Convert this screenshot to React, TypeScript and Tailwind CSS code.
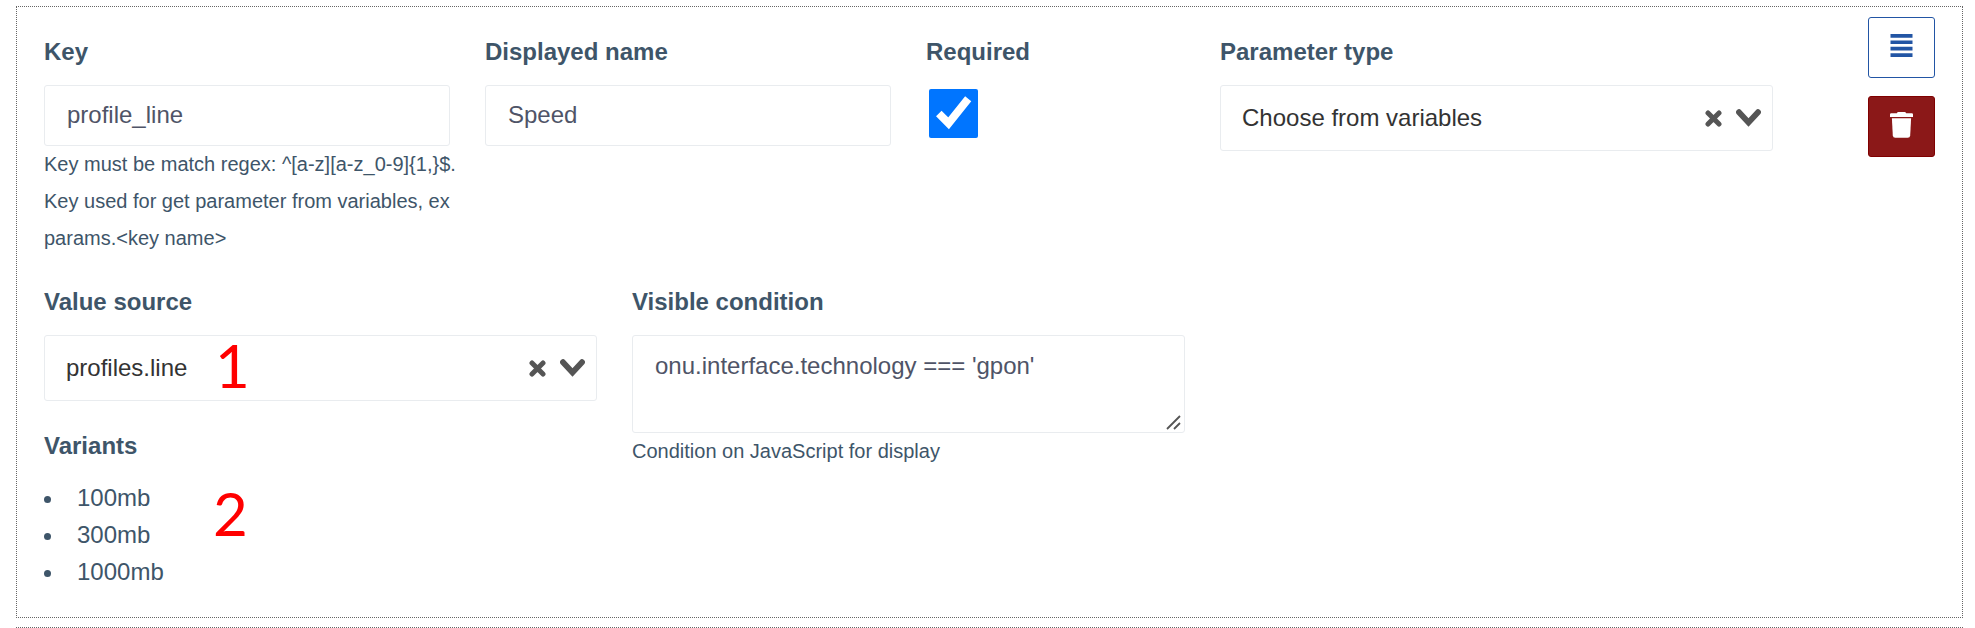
import type { ReactNode } from 'react';

function Label({ htmlFor, children }: { htmlFor: string; children: ReactNode }) {
  return (
    <label htmlFor={htmlFor} className="mb-[15px] block text-2xl leading-[37px] font-bold">
      {children}
    </label>
  );
}

function Help({ children }: { children: ReactNode }) {
  return <p className="text-[20px] leading-[37px] whitespace-nowrap">{children}</p>;
}

function TextInput({ id, value }: { id: string; value: string }) {
  return (
    <input
      id={id}
      type="text"
      defaultValue={value}
      className="block h-[61px] w-full rounded-[3px] border border-[#e9ecef] bg-white px-[22px] pb-[2px] text-2xl text-[#4f5467] outline-none"
    />
  );
}

function SelectBox({ id, value, children }: { id: string; value: string; children?: ReactNode }) {
  return (
    <div className="relative">
      <select
        id={id}
        defaultValue={value}
        className="block h-[66px] w-full appearance-none rounded-[3px] border border-[#e9ecef] bg-white pr-24 pl-[21px] text-2xl text-[#333333] outline-none"
      >
        <option>{value}</option>
      </select>
      <div className="pointer-events-none absolute inset-y-0 right-3 flex items-center gap-[14px] text-[#555555]">
        <button type="button" aria-label="Clear" className="pointer-events-auto">
          <svg width="17" height="17" viewBox="0 0 17 17" className="block">
            <path d="M3 3L14 14M14 3L3 14" stroke="currentColor" strokeWidth="5" strokeLinecap="round" />
          </svg>
        </button>
        <svg width="25" height="18" viewBox="0 0 25 18" aria-hidden="true">
          <path d="M3 3.2L12.5 13.5L22 3.2" fill="none" stroke="currentColor" strokeWidth="5.8" strokeLinecap="round" />
        </svg>
      </div>
      {children}
    </div>
  );
}

function Marker({ children }: { children: ReactNode }) {
  return <span className="block font-['Lato',sans-serif] text-[60px] leading-[60px] text-[#ff0000]">{children}</span>;
}

const variants = ['100mb', '300mb', '1000mb'];

export default function App() {
  return (
    <main className="flex flex-col gap-[9px] bg-white pt-[6px] pr-3 pl-4 font-['Liberation_Sans',Arial,sans-serif] text-[#3e5569]">
      <section className="flex items-start border border-dotted border-[#666666] px-[27px]">
        <div className="mr-[95px] grid flex-1 grid-cols-12 gap-x-[35px] gap-y-[26px] pt-[26px] pb-[27px]">
          <div className="col-span-3 min-w-0">
            <Label htmlFor="key">Key</Label>
            <TextInput id="key" value="profile_line" />
            <Help>
              {'Key must be match regex: ^[a-z][a-z_0-9]{1,}$.'}
              <br />
              Key used for get parameter from variables, ex
              <br />
              {'params.<key name>'}
            </Help>
          </div>
          <div className="col-span-3 min-w-0">
            <Label htmlFor="name">Displayed name</Label>
            <TextInput id="name" value="Speed" />
          </div>
          <div className="col-span-2 min-w-0">
            <Label htmlFor="required">Required</Label>
            <div className="pt-1 pl-[3px]">
              <input id="required" type="checkbox" defaultChecked className="block size-[49px] accent-[#0075ff]" />
            </div>
          </div>
          <div className="col-span-4 min-w-0">
            <Label htmlFor="type">Parameter type</Label>
            <SelectBox id="type" value="Choose from variables" />
          </div>

          <div className="col-span-4 min-w-0">
            <Label htmlFor="source">Value source</Label>
            <SelectBox id="source" value="profiles.line">
              <div className="pointer-events-none absolute top-0 left-[171px]">
                <Marker>1</Marker>
              </div>
            </SelectBox>
            <h2 className="mt-[26px] mb-[15px] text-2xl leading-[37px] font-bold">Variants</h2>
            <div className="relative">
              <ul className="text-2xl leading-[37px]">
                {variants.map((v) => (
                  <li key={v} className="flex items-center gap-[26px]">
                    <span className="mt-1 size-[7px] rounded-full bg-[#3e5569]" />
                    {v}
                  </li>
                ))}
              </ul>
              <div className="pointer-events-none absolute top-1 left-[169px]">
                <Marker>2</Marker>
              </div>
            </div>
          </div>
          <div className="col-span-4 min-w-0">
            <Label htmlFor="condition">Visible condition</Label>
            <div className="relative">
              <textarea
                id="condition"
                defaultValue="onu.interface.technology === 'gpon'"
                className="block h-[98px] w-full resize-none rounded-[3px] border border-[#e9ecef] bg-white px-[22px] py-[11px] text-2xl leading-[37px] text-[#4f5467] outline-none"
              />
              <svg width="15" height="15" viewBox="0 0 15 15" className="absolute right-1 bottom-[3px]" aria-hidden="true">
                <path d="M1 14L14 1M8 14L14 8" stroke="#555555" strokeWidth="1.8" />
              </svg>
            </div>
            <Help>Condition on JavaScript for display</Help>
          </div>
        </div>

        <div className="flex flex-col gap-[18px] pt-[10px]">
          <button
            type="button"
            aria-label="Move"
            className="flex h-[61px] w-[67px] justify-center rounded-[3px] border border-[#2255a4] bg-white pt-4 text-[#2255a4]"
          >
            <svg width="23" height="23" viewBox="0 0 23 23" fill="currentColor">
              <path d="M.5 0h22v3.7H.5zM.5 6.4h22v3.7H.5zM.5 12.8h22v3.7H.5zM.5 19.2h22v3.7H.5z" />
            </svg>
          </button>
          <button
            type="button"
            aria-label="Delete"
            className="flex h-[61px] w-[67px] justify-center rounded-[3px] border border-[#800000] bg-[#8b1818] pt-[15px] text-white"
          >
            <svg width="23" height="26" viewBox="0 0 23 26" fill="currentColor">
              <path d="M1.2 1.3H6.8Q7.4 0 8.4 0H14.6Q15.6 0 16.2 1.3H21.8Q23 1.3 23 2.5V5H0V2.5Q0 1.3 1.2 1.3Z" />
              <path d="M1.9 6.3H21.1L20.2 23.4Q20 25.8 17.7 25.8H5.3Q3 25.8 2.8 23.4Z" />
            </svg>
          </button>
        </div>
      </section>
      <div className="border-t border-dotted border-[#666666]" />
    </main>
  );
}
